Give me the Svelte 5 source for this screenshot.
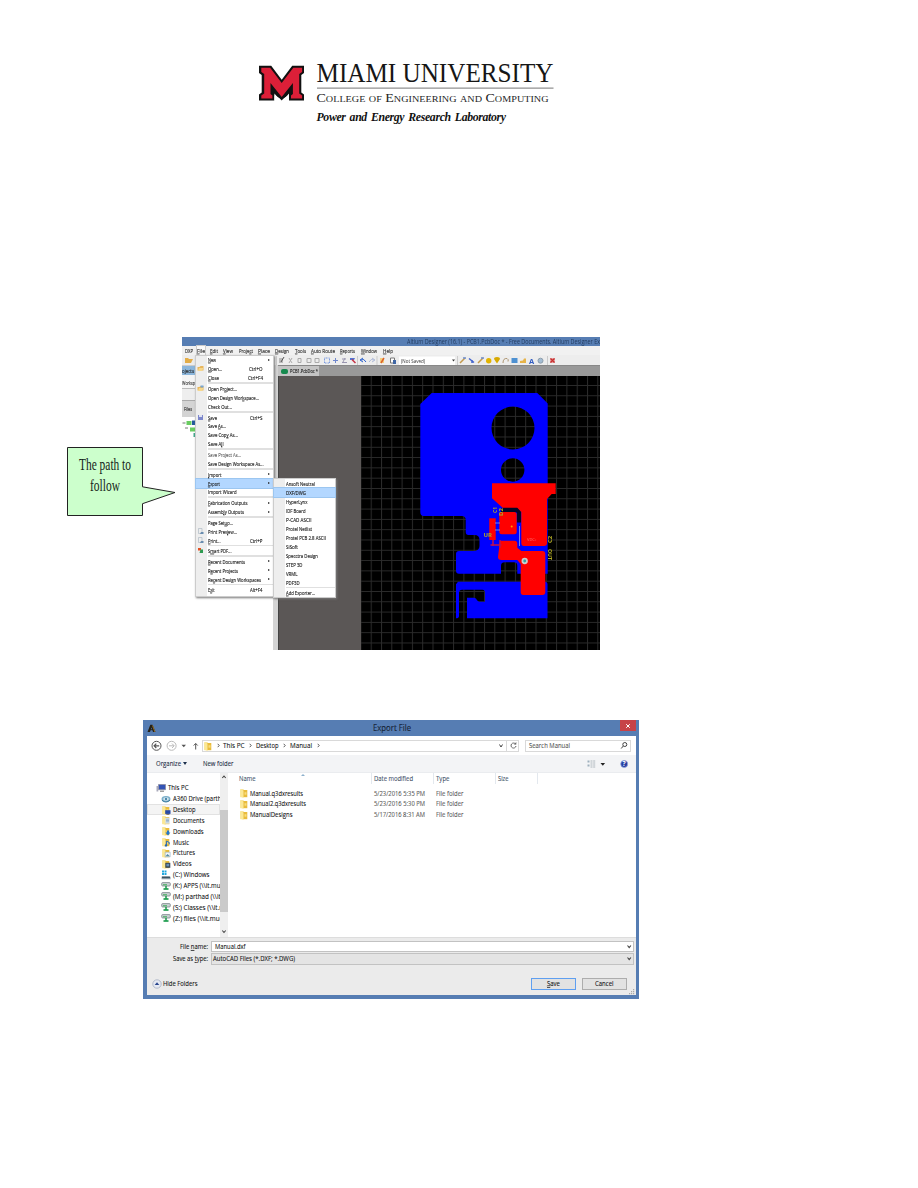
<script>
  const menuBar = [
    ['DXP', 8, 4, -1], ['File', 8, 5, 0], ['Edit', 8, 5, 0], ['View', 10, 6, 0],
    ['Project', 14, 5, 5], ['Place', 12, 5, 0], ['Design', 14, 6, 0], ['Tools', 11, 5, 0],
    ['Auto Route', 24, 5, 0], ['Reports', 15, 6, 0], ['Window', 16, 6, 0], ['Help', 10, 0, 0]
  ];
  // label, width, underlined letter, shortcut, shortcut width, submenu arrow
  const fileMenu = [
    ['New', 8, 0, '', 0, true], ['Open...', 14, 0, 'Ctrl+O', 13.5], ['Close', 11, 0, 'Ctrl+F4', 15], null,
    ['Open Project...', 29, 7], ['Open Design Workspace...', 51, 15], ['Check Out...', 24, -1], null,
    ['Save', 9, 0, 'Ctrl+S', 12.5], ['Save As...', 18, 5], ['Save Copy As...', 30, 8], ['Save All', 15.5, 6], null,
    ['Save Project As...', 33, -1, '', 0, false, '#999'], ['Save Design Workspace As...', 55.5, -1], null,
    ['Import', 13.5, 0, '', 0, true], ['Export', 12, 0, '', 0, true], ['Import Wizard', 28.5, -1], null,
    ['Fabrication Outputs', 39.5, 0, '', 0, true], ['Assembly Outputs', 36, 6, '', 0, true], null,
    ['Page Setup...', 25, 8], ['Print Preview...', 29, 10], ['Print...', 12.5, 0, 'Ctrl+P', 12.5], null,
    ['Smart PDF...', 23.5, 1], null,
    ['Recent Documents', 37, 0, '', 0, true], ['Recent Projects', 30, 1, '', 0, true], ['Recent Design Workspaces', 53, 2, '', 0, true], null,
    ['Exit', 6.5, 1, 'Alt+F4', 12.5]
  ];
  const exportMenu = [
    ['Ansoft Neutral', 29], ['DXF/DWG', 20], ['HyperLynx', 21.5], ['IDF Board', 19.5], ['P-CAD ASCII', 25.5],
    ['Protel Netlist', 26], ['Protel PCB 2.8 ASCII', 40], ['SiSoft', 12], ['Specctra Design', 32], ['STEP 3D', 16.5],
    ['VRML', 11.5], ['PDF3D', 13.5]
  ];
  const tree = [
    ['A360 Drive (parthad)', 57, 'cloud'], ['Desktop', 22.5, 'desk'], ['Documents', 31.5, 'doc'],
    ['Downloads', 30.5, 'down'], ['Music', 16, 'music'], ['Pictures', 22, 'pic'], ['Videos', 18.5, 'vid'],
    ['(C:) Windows', 36.5, 'disk'], ['(K:) APPS (\\\\it.muohio', 60, 'net'], ['(M:) parthad (\\\\it.mu', 59, 'net'],
    ['(S:) Classes (\\\\it.muo', 60, 'net'], ['(Z:) files (\\\\it.muohio', 60, 'net']
  ];
  const files = [
    ['Manual.q3dxresults', 53, '5/23/2016 5:35 PM'],
    ['Manual2.q3dxresults', 56, '5/23/2016 5:30 PM'],
    ['ManualDesigns', 42.5, '5/17/2016 8:31 AM']
  ];
</script>

{#snippet fit(text, w, size = 7, fill = '#111', u = -1)}
  <svg class="fit" width={w} height="9" viewBox="0 0 {w} 9">
    <text x="0" y={4.5 + size * 0.36} font-size={size} {fill} textLength={w} lengthAdjust="spacingAndGlyphs">{#if u < 0}{text}{:else}{text.slice(0, u)}<tspan text-decoration="underline">{text[u]}</tspan>{text.slice(u + 1)}{/if}</text>
  </svg>
{/snippet}

{#snippet folder(kind = '')}
  <svg class="fold" width="10" height="10" viewBox="0 0 10 10">
    <path d="M1.3 1.2h3.4v8H1.3z" fill="#f7df86" /><path d="M3.7 2h4.6v7.2H3.7z" fill="#e9bc3c" />
    <path d="M1.3 1.2l3.2 1.2v7.4l-3.2-1z" fill="#fbe896" /><path d="M5.5 4.2h2v2.5h-2z" fill="#f8dc7c" />
    {#if kind === 'desk'}<path d="M4.2 5.2h5.3v3.7H4.2z" fill="#2549a8" /><path d="M5.4 9h3v.7h-3z" fill="#555" />
    {:else if kind === 'doc'}<path d="M4.3 2.7h4.3v6H4.3z" fill="#dbe8f2" /><path d="M5 4.2h3M5 5.5h3M5 6.8h3" stroke="#6f91b4" stroke-width=".6" />
    {:else if kind === 'down'}<path d="M6 4.5h2v2h1.4L7 9.6 4.5 6.5H6z" fill="#2277cb" />
    {:else if kind === 'music'}<path d="M5.4 8.5V4.2l2.8 1.2v2" stroke="#2268b8" stroke-width="1" fill="none" /><circle cx="5" cy="8.4" r="1.2" fill="#2268b8" />
    {:else if kind === 'pic'}<path d="M4.2 4.2h5v4.6h-5z" fill="#f1f6f9" stroke="#83a5bd" stroke-width=".5" /><path d="M4.6 8.2L6.5 6l2.4 2.2z" fill="#538ba5" />
    {:else if kind === 'vid'}<path d="M4.3 3.8h5v5h-5z" fill="#394857" /><path d="M5.4 4.8h2.8v2.5H5.4z" fill="#668fb6" />{/if}
  </svg>
{/snippet}

{#snippet treeIcon(kind)}
  {#if kind === 'cloud'}
    <svg width="10" height="10" viewBox="0 0 10 10"><ellipse cx="5" cy="5" rx="4.5" ry="3" fill="#7aafc9" /><ellipse cx="5" cy="5" rx="2.8" ry="1.7" fill="#dcebf2" /><path d="M1 6.3q4 3.5 8-.2" stroke="#397a9e" fill="none" /><circle cx="5" cy="5" r="1.2" fill="#4787aa" /></svg>
  {:else if kind === 'disk'}
    <svg width="10" height="10" viewBox="0 0 10 10"><path d="M1 .5h2v2H1zM3.5.5h2v2h-2zM1 3h2v2H1zM3.500 3h2v2h-2z" fill="#21a7dd" /><path d="M1 6h7.5l1 1v2.2H.6V7z" fill="#8a99a3" /><path d="M1 7.5h8" stroke="#3a5362" /></svg>
  {:else if kind === 'net'}
    <svg width="10" height="10" viewBox="0 0 10 10"><rect x=".7" y="1.6" width="8.6" height="3.4" rx="1" fill="#cad1d3" stroke="#7b858a" stroke-width=".8" /><path d="M2 3.8h4" stroke="#39ad55" /><path d="M5 5v3" stroke="#179648" stroke-width="1.5" /><path d="M2.500 8h5" stroke="#1f9e50" stroke-width="1.7" /></svg>
  {:else}{@render folder(kind)}{/if}
{/snippet}

{#snippet chev(x = 3)}
  <svg class="chev" width={x} height="5" viewBox="0 0 3 5"><path d="M.7.8L2.2 2.5.7 4.2" fill="none" stroke="#333" stroke-width=".8" /></svg>
{/snippet}

{#snippet down()}
  <svg width="8" height="9" viewBox="0 0 8 9"><path d="M2.500 3.500l1.700 2.200 1.700-2.200" fill="none" stroke="#444" stroke-width="1.100" /></svg>
{/snippet}

<main>
  <header>
    <svg width="300" height="70" viewBox="256 60 300 70">
      <path d="M259 65.800h12.200l10.500 14 10.500-14H304v7.200l-2.700 2v17.500l2.700 2v6h-15v-5.200l-7.300 4-7.300-4v5.200H259v-6l2.700-2V75l-2.700-2z" fill="#111" />
      <path d="M274.400 93.500l7.300 8.200 7.300-8.200v7.200h-14.600z" fill="#fff" />
      <path d="M274.400 92.500l7.300 8 7.300-8v-3h-14.600z" fill="#111" />
      <path d="M261.300 67.700h8.800l11.600 15.400 11.600-15.400h8.800v4.200l-2.900 2.200v19.300l2.900 2v3.100H291v-3l1.900-1.400V83l-11.200 14-11.200-14v11.100l1.900 1.400v3h-11.100v-3.100l2.900-2V74.100l-2.900-2.200z" fill="#dc1f38" />
      <text x="316.500" y="81.500" font-size="27" textLength="237" lengthAdjust="spacingAndGlyphs" fill="#161616">MIAMI UNIVERSITY</text>
      <path d="M317 88.200h236.500" stroke="#919191" stroke-width="1.200" />
      <text x="316.500" y="102" font-size="12.400" textLength="232" lengthAdjust="spacingAndGlyphs" fill="#222" style:font-variant="small-caps">College of Engineering and Computing</text>
      <text x="316.500" y="121.300" font-size="11.800" font-weight="bold" font-style="italic" textLength="189.500" lengthAdjust="spacing" word-spacing="1.500" fill="#111">Power and Energy Research Laboratory</text>
    </svg>
  </header>

  <section class="figure">
    <svg class="callout" width="115" height="74" viewBox="64 444 115 74">
      <path d="M67.500 447.500h75v39.300l32.500 5.700-32.500 11.200v11.800h-75z" fill="#cfc" stroke="#222" stroke-width="1" />
      <text x="79" y="470" font-size="17" textLength="52" lengthAdjust="spacingAndGlyphs" fill="#16251a">The path to</text>
      <text x="90" y="491" font-size="17" textLength="30" lengthAdjust="spacingAndGlyphs" fill="#16251a">follow</text>
    </svg>

    <div class="altium">
      <div class="atitle">{@render fit('Altium Designer (16.1) - PCB1.PcbDoc * - Free Documents. Altium Designer Ex', 193, 6.2, '#233c60')}</div>
      <div class="amenu">
        {#each menuBar as [label, w, gap, u], i}
          <span class:open={i === 1} style:margin-right="{gap}px">{@render fit(label, w, 6, '#333', u)}</span>
        {/each}
      </div>
      <svg class="atools" width="418" height="11" viewBox="182 355 418 11">
        <path d="M185 358h3l1 1h4l-2 4h-6z" fill="#e3ad48" />
        <path d="M279 358h4v5h-4z" fill="#bbb" /><path d="M281 362l3-5" stroke="#555" />
        <g fill="none" stroke="#aaa"><path d="M289 358l3 5m0-5l-3 5" /><path d="M298 358.500h3v4h-3zM307 358.500h4v4h-4zM315 358.500h4v4h-4z" /></g>
        <rect x="324.500" y="358" width="5" height="5" fill="none" stroke="#7b9be0" stroke-dasharray="1 .5" />
        <path d="M333 360.500h5M335.500 358v5" stroke="#6f87cd" /><path d="M342 359h4M342 362.500h5M345 358l-2 4" stroke="#9a96b0" />
        <path d="M350 358h5l-1 2h-4z" fill="#5572cf" /><path d="M352 359.500l3.500 3.500" stroke="#c53345" stroke-width="1.500" />
        <path d="M361 360q3-2 5 2M363 358l-3 2 3 2" fill="none" stroke="#285fcb" /><path d="M374 360q-3-2-5 2M372 358l3 2-3 2" fill="none" stroke="#aebad8" />
        <path d="M380 358h4v5h-4z" fill="#f3d080" /><path d="M381 363l3-5" stroke="#dc622a" stroke-width="1.500" />
        <path d="M390.500 358h4v5h-4z" fill="#fff" stroke="#777" /><path d="M393 360h3v4h-3z" fill="#4067a5" />
        <rect x="399" y="356.500" width="56" height="8.500" fill="#fff" />
        <text x="401" y="362.600" font-size="5.500" textLength="24" lengthAdjust="spacingAndGlyphs" fill="#333">(Not Saved)</text>
        <path d="M452 359.500h3l-1.500 2z" fill="#333" /><path d="M276.500 356v9M357.500 356v9M377 356v9M457.500 356v9M547.500 356v9" stroke="#bbb" stroke-width=".7" />
        <path d="M460 363l5-5M478 363l5-5" stroke="#c49a4c" stroke-width="1.500" /><path d="M463 358h3M481 358h3" stroke="#6f8fce" stroke-width="1.500" />
        <path d="M469 358.500l5 4M472 360v3" stroke="#4264cd" stroke-width="1.500" /><circle cx="488.700" cy="360.800" r="2.700" fill="#e3b400" />
        <path d="M494 359q0-2 3-2 3 0 3 2l-3 4.500z" fill="#d7a900" /><path d="M503 363q0-5 4-4.500 2 1 1 3" stroke="#ad9572" fill="none" />
        <path d="M511.500 358h6v5h-6z" fill="#4e91d2" /><path d="M520 363v-2l3-.5 1-2h2v4.500z" fill="#e7b449" />
        <text x="529" y="363.500" font-size="7.500" font-weight="bold" fill="#325dc2">A</text><circle cx="540.500" cy="360.700" r="2.500" fill="#a3bdd4" stroke="#8c9caa" />
        <path d="M550 358h5v5h-5z" fill="#e3a7a7" /><path d="M550.500 358.500l4 4m0-4l-4 4" stroke="#c82d2d" stroke-width="1.300" />
      </svg>
      <div class="abody">
        <div class="projects">
          <div class="phead">{@render fit('ojects', 12, 6, '#222')}</div>
          <div class="pwork">{@render fit('Worksp', 13, 5.5, '#444')}</div>
          <div class="pblank"></div>
          <div class="pfiles">{@render fit('Files', 8, 5.5, '#444')}</div>
          <svg width="13" height="24" viewBox="182 415 13 24"><path d="M182.500 421h3M185 426h3" stroke="#777" /><path d="M186.500 419h5v4h-5zM190 425.500h5v4h-5z" fill="#69cc60" /><path d="M192 418.500h3v4.500h-3z" fill="#24599c" /><path d="M193.500 431h1.500v4h-1.500z" fill="#40a78a" /></svg>
        </div>
        <div class="splitter"></div>
        <div class="doc">
          <div class="tabs"><div class="tab"><i></i>{@render fit('PCB1.PcbDoc *', 28, 5.5, '#222')}</div></div>
          <div class="canvas">
            <div class="void"></div>
            <svg width="239" height="274" viewBox="361 376 239 274">
              <defs><pattern id="grid" x="370.700" y="385" width="10.300" height="10.300" patternUnits="userSpaceOnUse"><path d="M.5 0v10.300M0 .5h10.300" stroke="#2b2b2b" stroke-width="1" fill="none" /></pattern></defs>
              <path d="M361 376h239v274H361z" fill="#000" /><path d="M361 376h239v274H361z" fill="url(#grid)" />
              <g fill="#00f" class="soft">
                <path fill-rule="evenodd" d="M431.700 393h105.600l10.400 10.500v170.200H517.300v-8q0-3.400-3.500-3.400h-9q-3.800 0-3.800 3.400v8H459q-3 0-3-3V554q0-3 3-3h14q6.500 0 6.500-5v-6q0-5-5-5h-6q-2.800 0-2.800-3v-12q0-4-4-4h-38q-3.400 0-3.400-4V404zM491.500 428a21.500 21.500 0 1 0 43 0 21.500 21.500 0 1 0-43 0zM501 470a11.700 11.700 0 1 0 23.400 0 11.700 11.700 0 1 0-23.400 0z" />
                <path d="M458 581.700h87q2.500 0 2.500 2.500v34H467v-20.500h7q2.500 0 3 2.500l2 1.500h6v-9.500q0-2.500-2.500-2.500H462q-3 0-3 3v23q0 2.600-3 2.600v-34z" />
              </g>
              <path d="M501 509q2-2.500 5-2.500h11l4 5v11h-4v-10h-16z" fill="#050526" />
              <g fill="red" class="soft">
                <path d="M492 483.300h63.700V494h-4l-4.700 5v44q0 3-3 3h-20q-2.700 0-2.700-3v-31l-4-4.300h-14.600L492 498.300z" />
                <rect x="499.300" y="512" width="17.400" height="22.300" rx="2.500" /><rect x="489.300" y="518.300" width="6.400" height="21.700" />
                <path d="M500 540.700h14.300q3 0 3 3v4l4 3.300h21q3 0 3 3v38q0 3-3 3h-19q-2.600 0-2.600-3v-28l-3.400-4h-16q-3.300 0-3.300-3z" />
              </g>
              <g fill="none" class="soft"><path d="M519.500 526v20M495 523h5M495 530h5" stroke="#92a0dd" stroke-width=".8" /><path d="M490.500 545h11M493 540v6M500 540v8" stroke="#c3124b" stroke-width="1.500" /></g>
              <g font-size="6" font-weight="bold" fill="#b1aa25" class="soft"><text transform="translate(496.500 513) rotate(-90)" font-size="5">C1</text><text transform="translate(503 516) rotate(-90)">D2</text><text x="483.500" y="537">UR</text><text transform="translate(552 543) rotate(-90)">C2</text><text transform="translate(548 549) rotate(90)" textLength="11" lengthAdjust="spacingAndGlyphs">OUT</text></g>
              <text x="527" y="541" font-size="4" fill="#ff7777" class="soft">VDC+</text><circle cx="511.700" cy="526.500" r="1" fill="#ff9a00" />
              <circle cx="524.700" cy="561" r="2.300" fill="#33a5a2" stroke="#ccc" stroke-width="1.700" />
            </svg>
          </div>
        </div>
      </div>

      <div class="menu file">
        {#each fileMenu as it}
          {#if it}
            <div class="mi" class:hot={it[0] === 'Export'}>
              <b>
                {#if it[0] === 'Open...' || it[0] === 'Open Project...'}<svg width="7" height="7" viewBox="0 0 7 7"><path d="M.5 2h2l1-1h3v4.500h-6z" fill="#e8b65c" /><path d="M2 3h4.500l-1.500 3h-4z" fill="#f7d88c" />{#if it[0] !== 'Open...'}<path d="M3.500.500h3v2h-3z" fill="#77a6d4" />{/if}</svg>
                {:else if it[0] === 'Save'}<svg width="7" height="7" viewBox="0 0 7 7"><path d="M1 1h5v5H1z" fill="#7c86cb" /><path d="M2 1h3v2H2z" fill="#dfe3f3" /></svg>
                {:else if it[0].startsWith('Print')}<svg width="7" height="7" viewBox="0 0 7 7"><path d="M1.500.500h3.500v5H1.500z" fill="#eee" stroke="#aeb9c3" stroke-width=".7" /><path d="M4 4h2.500v2H3z" fill="#698db0" /></svg>
                {:else if it[0] === 'Smart PDF...'}<svg width="7" height="7" viewBox="0 0 7 7"><path d="M1 1h3v2.500H1z" fill="#e25124" /><path d="M3.500 2.500h2.500V6H2.500z" fill="#2c9b50" /></svg>{/if}
              </b>
              {@render fit(it[0], it[1], 6, it[6] ?? '#111', it[2])}
              <span class="grow"></span>
              {#if it[3]}<span class="key">{@render fit(it[3], it[4], 5.800, '#111')}</span>{/if}
              {#if it[5]}<span class="arrow"></span>{/if}
            </div>
          {:else}<div class="sep"></div>{/if}
        {/each}
      </div>
      <div class="menu sub">
        {#each exportMenu as [label, w], i}
          <div class="mi" class:hot={i === 1}><b></b>{@render fit(label, w, 6, '#111')}</div>
        {/each}
        <div class="sep"></div>
        <div class="mi"><b></b>{@render fit('Add Exporter...', 29, 6, '#111', 0)}</div>
      </div>
    </div>
  </section>

  <section class="dialog">
    <div class="dtitle">
      <svg width="9" height="9" viewBox="0 0 9 9"><path d="M.5 8L3.300.700h2.200L8.500 8H6L4.500 3.500 3 8z" fill="#252117" /><path d="M3 5.700h3.200" stroke="#252117" /><path d="M5.500 1.500L8 8" stroke="#96712e" /></svg>
      <span class="cap">{@render fit('Export File', 38, 8.2, '#17253a')}</span>
      <span class="x"><svg width="6" height="6" viewBox="0 0 6 6"><path d="M1.200 1.200l3.600 3.600m0-3.600L1.200 4.800" stroke="#fff" /></svg></span>
    </div>
    <div class="dclient">
      <div class="nav">
        <svg width="51" height="12" viewBox="150 740 51 12"><g fill="none" stroke="#555"><circle cx="156.500" cy="745.800" r="4.500" /><path d="M159.200 745.800h-5M156.300 743.600l-2.200 2.200 2.200 2.200" stroke-width="1.200" /><g stroke="#bbb"><circle cx="171.600" cy="745.800" r="4.500" /><path d="M169 745.800h5M172 743.600l2.200 2.200-2.200 2.200" /></g><path d="M195.700 749.500v-6M193.700 745.500l2-2 2 2" stroke="#555" /></g><path d="M181.500 744.700h4.500l-2.200 2.600z" fill="#555" /></svg>
        <div class="addr">
          {@render folder()}<span class="g1">{@render chev()}</span>
          {@render fit('This PC', 21.5, 7)}<span class="g2">{@render chev()}</span>
          {@render fit('Desktop', 22.5, 7)}<span class="g3">{@render chev()}</span>
          {@render fit('Manual', 22, 7)}<span class="g3">{@render chev()}</span>
          <span class="grow"></span>
          <svg width="8" height="9" viewBox="0 0 8 9"><path d="M2.500 3.500L4 6l1.500-2.500" fill="none" stroke="#444" /></svg>
          <span class="reload"><svg width="9" height="9" viewBox="0 0 9 9"><path d="M6.500 3A2.500 2.500 0 1 0 7 5" fill="none" stroke="#666" /><path d="M4.800 3.500h2.500V1z" fill="#666" /></svg></span>
        </div>
        <div class="search">{@render fit('Search Manual', 41, 7, '#666')}<svg width="8" height="9" viewBox="0 0 8 9"><circle cx="4.800" cy="3.500" r="2" fill="none" stroke="#444" /><path d="M3.300 5L1.200 7.500" stroke="#444" /></svg></div>
      </div>
      <div class="tools">
        {@render fit('Organize', 25, 7, '#1b2f4b')}<i class="tri"></i><span class="nf">{@render fit('New folder', 30.5, 7, '#1b2f4b')}</span><span class="grow"></span>
        <svg width="52" height="12" viewBox="584 757 52 12"><path d="M587.500 759.500h2v2h-2zM587.500 763.500h2v2h-2z" fill="#9eb0bd" /><path d="M590.500 760h5M590.500 762h5M590.500 764h5M590.500 766h5" stroke="#8f9ba5" stroke-width=".7" stroke-dasharray="2 .7" /><path d="M600.500 762h4.600l-2.300 2.700z" fill="#222" /><circle cx="624.200" cy="763" r="3.500" fill="#263ea3" stroke="#96a8dd" stroke-width=".7" /><text x="622.500" y="765.400" font-size="6.500" font-weight="bold" fill="#fff">?</text></svg>
      </div>
      <div class="content">
        <div class="tree">
          <div class="ti root"><svg width="10" height="10" viewBox="0 0 10 10"><path d="M2.500 1.500h7v5.200h-7z" fill="#3354b5" stroke="#889" stroke-width=".7" /><path d="M.5 3h1.800v5.500H.5z" fill="#aab" /><path d="M4 8.200h4" stroke="#777" /></svg>{@render fit('This PC', 20.5, 7)}</div>
          {#each tree as [label, w, kind]}
            <div class="ti" class:sel={label === 'Desktop'}>{@render treeIcon(kind)}{@render fit(label, w, 7)}</div>
          {/each}
        </div>
        <div class="bar"><svg width="8" height="8" viewBox="0 0 8 8"><path d="M2.300 5L4 3l1.700 2" fill="none" stroke="#444" stroke-width="1.100" /></svg><i></i><svg width="8" height="8" viewBox="0 0 8 8"><path d="M2.300 1.500L4 3.500l1.700-2" fill="none" stroke="#444" stroke-width="1.100" /></svg></div>
        <div class="list">
          <div class="row head"><span>{@render fit('Name', 16.5, 7, '#4c607a')}<u></u></span><span>{@render fit('Date modified', 39, 7, '#4c607a')}</span><span>{@render fit('Type', 13.5, 7, '#4c607a')}</span><span>{@render fit('Size', 10.5, 7, '#4c607a')}</span><em></em></div>
          {#each files as [name, w, date]}
            <div class="row"><span>{@render folder()}{@render fit(name, w, 7)}</span><span>{@render fit(date, 51, 7, '#6d6d6d')}</span><span>{@render fit('File folder', 27.5, 7, '#6d6d6d')}</span></div>
          {/each}
        </div>
      </div>
      <div class="foot">
        <div class="field"><label for="fn">{@render fit('File name:', 28, 7, '#111', 5)}</label><div id="fn" class="inp">{@render fit('Manual.dxf', 30.5, 7)}<span class="grow"></span>{@render down()}</div></div>
        <div class="field"><label for="ft">{@render fit('Save as type:', 35, 7, '#111', 8)}</label><div id="ft" class="inp combo">{@render fit('AutoCAD Files (*.DXF; *.DWG)', 82, 7)}<span class="grow"></span>{@render down()}</div></div>
        <div class="actions">
          <svg width="10" height="10" viewBox="0 0 10 10"><circle cx="5" cy="5" r="4.200" fill="#e5e9f2" stroke="#a4afc2" stroke-width=".8" /><path d="M2.700 6L5 3.200 7.300 6z" fill="#28458d" /></svg>
          {@render fit('Hide Folders', 34.5, 7)}
          <span class="grow"></span>
          <div class="btn primary">{@render fit('Save', 13, 6.8, '#111', 0)}</div>
          <div class="btn">{@render fit('Cancel', 18.5, 6.8)}</div>
        </div>
        <svg class="grip" width="6" height="6" viewBox="0 0 6 6"><path d="M4 0h1.200v1.200H4zM2 2h1.200v1.200H2zM4 2h1.200v1.200H4zM0 4h1.200v1.200H0zM2 4h1.200v1.200H2zM4 4h1.200v1.200H4z" fill="#aaa" /></svg>
      </div>
    </div>
  </section>
</main>

<style>
  :global(body) { margin: 0; background: #fff; }
  main { width: 918px; height: 1188px; font-family: "Open Sans", sans-serif; overflow: hidden; }
  main * { box-sizing: border-box; }
  svg { display: block; flex: none; }
  .fit { overflow: visible; }
  .dialog .fit text { stroke: currentColor; stroke-width: .08px; }
  .grow { flex: 1; }
  header { padding: 60px 0 0 256px; height: 337px; }
  header text, .callout text { font-family: "Liberation Serif", serif; }
  .figure { display: flex; height: 313px; padding-left: 64px; }
  .callout { margin: 107px 3px 0 0; }
  .altium { position: relative; width: 418px; height: 313px; overflow: hidden; display: flex; flex-direction: column; background: #ededed; }
  .altium .fit { filter: blur(.5px); }
  .altium .fit text { stroke: #333; stroke-width: .15px; }
  .atools, .soft, .mi b svg { filter: blur(.4px); }
  .atitle { height: 9px; background: #567db3; padding-left: 225px; }
  .atitle .fit text, .altium .atitle .fit text { stroke: none; }
  .amenu { height: 9px; display: flex; padding-left: 3px; align-items: center; background: #f1f1f1; }
  .open { outline: 1px solid #ccc; background: #fafafa; }
  .abody { display: flex; flex: 1; margin-top: -1px; }
  .projects { width: 91px; background: #fff; }
  .phead { height: 10px; background: #8bb6dc; border-top: 1px solid #ccc; }
  .pwork { height: 14px; background: #f5f5f5; padding-top: 4px; border-bottom: 1px solid #bbb; overflow: hidden; }
  .pblank { height: 11px; background: #eee; }
  .pfiles { height: 17px; background: #d4d4d4; padding: 4px 0 0 2px; border-top: 1px solid #aaa; }
  .splitter { width: 5px; background: #d4d4d4; }
  .doc { flex: 1; display: flex; flex-direction: column; }
  .tabs { height: 11px; background: #999; border-top: 1px solid #888; }
  .tab { width: 41px; height: 10px; background: #c4c4c4; display: flex; align-items: center; padding-left: 3px; gap: 2px; }
  .tab i { width: 7px; height: 5px; border-radius: 2px; background: #16894e; }
  .canvas { display: flex; flex: 1; }
  .void { width: 83px; background: #5b5756; border-left: 1px solid #444; }
  .menu { position: absolute; background: linear-gradient(90deg, #eee 11px, #fff 11px); border: 1px solid #ccc; box-shadow: 1px 1px 2px #777; }
  .file { left: 13px; top: 17.500px; width: 78.500px; height: 242px; }
  .sub { left: 91px; top: 141.300px; width: 63px; height: 119.500px; }
  .mi { height: 8.950px; display: flex; align-items: center; }
  .mi b { width: 11.500px; flex: none; padding-left: 1px; }
  .key { margin-right: 10px; }
  .arrow { border: 1.500px solid transparent; border-left: 2px solid #222; border-right: 0; margin-right: 3px; }
  .hot { background: #b3d7ff; outline: .5px solid #9cc6f0; }
  .sep { height: 1.720px; margin-left: 12px; background: #e0e0e0; }

  .dialog { margin: 70px 0 0 143px; width: 496px; height: 279px; background: #567db3; padding: 0 3px 4px 4px; display: flex; flex-direction: column; }
  .dtitle { height: 16px; display: flex; }
  .dtitle > svg { margin-top: 4px; }
  .cap { margin: 4px 0 0 217px; flex: 1; }
  .x { width: 16px; height: 11px; background: #c74248; display: grid; place-items: center; margin-top: 0; }
  .dclient { flex: 1; background: #fff; display: flex; flex-direction: column; }
  .nav { height: 19px; display: flex; align-items: center; padding-left: 3px; }
  .addr { width: 317px; height: 12px; border: 1px solid #d9d9d9; display: flex; align-items: center; margin-left: 1px; }
  .g1 { margin: 0 3px 0 3.500px; } .g2 { margin: 0 3.500px 0 5px; } .g3 { margin: 0 4px 0 5px; }
  .reload { border-left: 1px solid #d9d9d9; padding-left: 2px; height: 10px; margin-left: 1px; }
  .search { width: 106px; height: 12px; border: 1px solid #d9d9d9; margin-left: 6px; padding: 0 2px 0 3px; display: flex; justify-content: space-between; align-items: center; }
  .tools { height: 18px; background: #f3f4f6; display: flex; align-items: center; padding: 0 0 0 9px; border-bottom: 1px solid #eaecef; }
  .tri { border: 2.500px solid transparent; border-top: 3px solid #1b2f4b; border-bottom: 0; margin-left: 2px; }
  .nf { margin-left: 15.500px; }
  .content { height: 164px; display: flex; }
  .tree { width: 73px; overflow: hidden; padding-top: 9.500px; }
  .ti { height: 10.850px; display: flex; align-items: center; padding-left: 14px; gap: 2px; }
  .root { padding-left: 9px; }
  .sel { background: #f4f4f4; box-shadow: inset 0 0 0 1px #e2e2e2; }
  .bar { width: 8px; background: #efefef; display: flex; flex-direction: column; justify-content: space-between; }
  .bar i { height: 102px; width: 8px; background: #cacaca; margin-bottom: 9px; margin-top: 21px; }
  .list { flex: 1; padding-left: 10.500px; }
  .row { height: 10.800px; display: grid; grid-template-columns: 135px 62.500px 62px 38.500px 1px; align-items: center; }
  .row span { display: flex; align-items: center; gap: 1px; }
  .row u { align-self: flex-start; border: 2px solid transparent; border-bottom: 2px solid #8eb1cd; border-top: 0; margin-left: 45px; }
  .head { height: 11px; margin-bottom: 3.800px; background: linear-gradient(#e3e8ee, #e3e8ee) 132px 0 / 1px 11px no-repeat, linear-gradient(#e3e8ee, #e3e8ee) 194px 0 / 1px 11px no-repeat, linear-gradient(#e3e8ee, #e3e8ee) 256px 0 / 1px 11px no-repeat; }
  .head em { width: 1px; height: 11px; background: #e3e8ee; }
  .foot { flex: 1; background: #ebebeb; padding: 2px 2px 0 8px; position: relative; border-top: 1px solid #ddd; }
  .field { display: flex; height: 12.500px; align-items: center; }
  .field label { width: 56px; padding-right: 3px; display: flex; justify-content: flex-end; }
  .inp { flex: 1; height: 11.500px; background: #fff; border: 1px solid #c2c2c2; display: flex; align-items: center; padding-left: 3px; }
  .combo { background: #e4e4e4; padding-left: 1px; }
  .actions { display: flex; align-items: center; gap: 1.500px; margin: 12px 0 0 -3.500px; height: 13px; padding-right: 7px; }
  .btn { width: 45px; height: 12px; border: 1px solid #adadad; background: #e2e2e2; display: grid; place-items: center; margin-left: 5px; }
  .primary { border-color: #5f9ff0; }
  .grip { position: absolute; right: 1px; bottom: 0; }
</style>
